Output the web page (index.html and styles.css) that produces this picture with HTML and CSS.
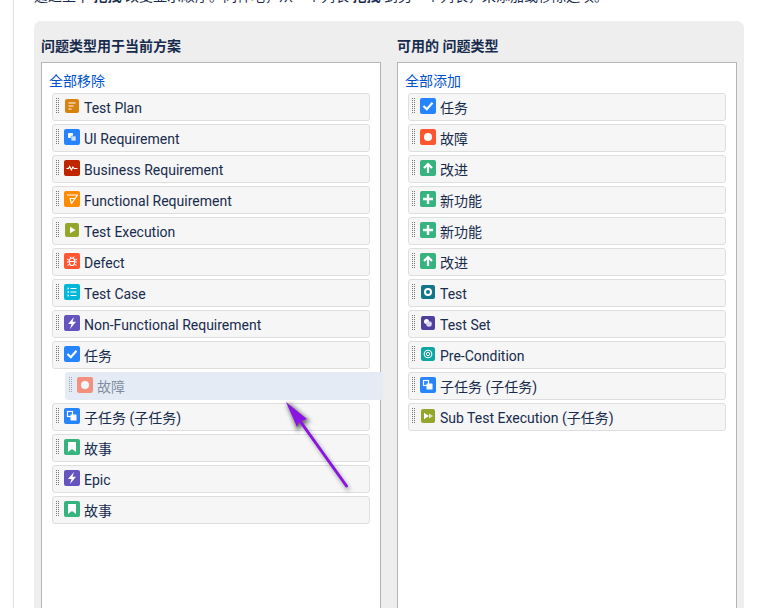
FILE: index.html
```html
<!DOCTYPE html>
<html lang="zh">
<head>
<meta charset="utf-8">
<title>问题类型方案</title>
<link rel="stylesheet" href="styles.css">
</head>
<body>
<svg class="defs" xmlns="http://www.w3.org/2000/svg">
<symbol id="i-plan" viewBox="0 0 14 14"><rect width="14" height="14" rx="2" fill="#d9820f"/><path d="M3.500 4h7M3.500 7h5M3.500 10h3" stroke="#fff" stroke-width="1.100"/></symbol>
<symbol id="i-ui" viewBox="0 0 16 16"><rect width="16" height="16" rx="2" fill="#2684ff"/><rect x="4" y="4" width="5" height="5" rx=".8" fill="#fff"/><rect x="7" y="7" width="5" height="5" rx=".8" fill="#cfe2ff" stroke="#2684ff" stroke-width=".6"/></symbol>
<symbol id="i-sub" viewBox="0 0 16 16"><rect width="16" height="16" rx="2" fill="#2684ff"/><rect x="3.500" y="3.500" width="5" height="5" fill="none" stroke="#fff" stroke-width="1.200"/><rect x="6.500" y="6.500" width="6" height="6" rx=".6" fill="#fff"/></symbol>
<symbol id="i-biz" viewBox="0 0 16 16"><rect width="16" height="16" rx="2" fill="#bf2600"/><path d="M2.500 8.500h2l1.200-2 1.600 3.500 1.600-3 1.200 1.500h3.400" fill="none" stroke="#fff" stroke-width="1.200"/></symbol>
<symbol id="i-func" viewBox="0 0 16 16"><rect width="16" height="16" rx="2" fill="#ff8b00"/><path d="M3 4h10.500L7.500 12.500 6 7.500h5" fill="none" stroke="#fff" stroke-width="1.200" stroke-linejoin="round"/></symbol>
<symbol id="i-exec" viewBox="0 0 14 14"><rect width="14" height="14" rx="2" fill="#94a62b"/><path d="M5 3.800 10.500 7 5 10.200z" fill="#fff"/></symbol>
<symbol id="i-subexec" viewBox="0 0 14 14"><rect width="14" height="14" rx="2" fill="#94a62b"/><path d="M3 3.800 8 7 3 10.200z" fill="#fff"/><path d="M8 4.500 12 7 8 9.500z" fill="#e4e9c3"/></symbol>
<symbol id="i-defect" viewBox="0 0 16 16"><rect width="16" height="16" rx="2" fill="#ff5630"/><rect x="5.500" y="5" width="5" height="7.500" rx="2.500" fill="none" stroke="#fff" stroke-width="1.200"/><path d="M6 3.500l1 1.500M10 3.500l-1 1.500M3 6l2.500 1.500M13 6l-2.500 1.500M3 9h2.500M13 9h-2.500M3.500 12.500l2-1.500M12.500 12.500l-2-1.500M5.500 8.500h5" stroke="#fff" stroke-width="1"/></symbol>
<symbol id="i-case" viewBox="0 0 16 16"><rect width="16" height="16" rx="2" fill="#00b8d9"/><path d="M6.500 4.500h6M6.500 8h6M6.500 11.500h6" stroke="#fff" stroke-width="1.200"/><path d="M3.500 4.500h1.500M3.500 8h1.500M3.500 11.500h1.500" stroke="#fff" stroke-width="1.600"/></symbol>
<symbol id="i-bolt" viewBox="0 0 16 16"><rect width="16" height="16" rx="2" fill="#6554c0"/><path d="M10 2 4 9h3.500L6 14l6-7.200H8.500z" fill="#fff"/></symbol>
<symbol id="i-task" viewBox="0 0 16 16"><rect width="16" height="16" rx="2" fill="#2684ff"/><path d="M3.500 8 6.800 11.200 12.500 4.800" fill="none" stroke="#fff" stroke-width="2.200"/></symbol>
<symbol id="i-bug" viewBox="0 0 16 16"><rect width="16" height="16" rx="2" fill="#ff5630"/><circle cx="8" cy="8" r="4" fill="#fff"/></symbol>
<symbol id="i-story" viewBox="0 0 16 16"><rect width="16" height="16" rx="2" fill="#36b37e"/><path d="M4 3h8v10L8 10l-4 3z" fill="#fff"/></symbol>
<symbol id="i-up" viewBox="0 0 16 16"><rect width="16" height="16" rx="2" fill="#36b37e"/><path d="M8 13V4M4 8l4-4 4 4" fill="none" stroke="#fff" stroke-width="2.200"/></symbol>
<symbol id="i-plus" viewBox="0 0 16 16"><rect width="16" height="16" rx="2" fill="#36b37e"/><path d="M8 3v10M3 8h10" stroke="#fff" stroke-width="2.400"/></symbol>
<symbol id="i-test" viewBox="0 0 14 14"><rect width="14" height="14" rx="2" fill="#12758a"/><circle cx="7" cy="7" r="3" fill="none" stroke="#fff" stroke-width="2"/></symbol>
<symbol id="i-set" viewBox="0 0 14 14"><rect width="14" height="14" rx="2" fill="#4f3f9e"/><circle cx="5.500" cy="5.500" r="2.500" fill="#fff"/><circle cx="8" cy="8" r="2.800" fill="#dcd8f0"/></symbol>
<symbol id="i-pre" viewBox="0 0 14 14"><rect width="14" height="14" rx="2.500" fill="#0ea5a5"/><circle cx="7" cy="7" r="3.800" fill="none" stroke="#fff" stroke-width="1.100"/><circle cx="7" cy="7" r="1.700" fill="none" stroke="#fff" stroke-width="1"/></symbol>
</svg>

<main class="page">
  <p class="intro">通过上下 <strong>拖拽</strong> 改变显示顺序。同样地，从一个列表 <strong>拖拽</strong> 到另一个列表，来添加或移除选项。</p>
  <section class="panel">
    <div class="col">
      <h3 class="col-title">问题类型用于当前方案</h3>
      <div class="box">
        <a class="bulk" href="#">全部移除</a>
        <ul class="list">
          <li class="item"><span class="grip"></span><svg class="ico small"><use href="#i-plan"/></svg><span>Test Plan</span></li>
          <li class="item"><span class="grip"></span><svg class="ico"><use href="#i-ui"/></svg><span>UI Requirement</span></li>
          <li class="item"><span class="grip"></span><svg class="ico"><use href="#i-biz"/></svg><span>Business Requirement</span></li>
          <li class="item"><span class="grip"></span><svg class="ico"><use href="#i-func"/></svg><span>Functional Requirement</span></li>
          <li class="item"><span class="grip"></span><svg class="ico small"><use href="#i-exec"/></svg><span>Test Execution</span></li>
          <li class="item"><span class="grip"></span><svg class="ico"><use href="#i-defect"/></svg><span>Defect</span></li>
          <li class="item"><span class="grip"></span><svg class="ico"><use href="#i-case"/></svg><span>Test Case</span></li>
          <li class="item"><span class="grip"></span><svg class="ico"><use href="#i-bolt"/></svg><span>Non-Functional Requirement</span></li>
          <li class="item"><span class="grip"></span><svg class="ico"><use href="#i-task"/></svg><span>任务</span></li>
          <li class="item ghost"><span class="grip"></span><svg class="ico"><use href="#i-bug"/></svg><span>故障</span></li>
          <li class="item"><span class="grip"></span><svg class="ico"><use href="#i-sub"/></svg><span>子任务 (子任务)</span></li>
          <li class="item"><span class="grip"></span><svg class="ico"><use href="#i-story"/></svg><span>故事</span></li>
          <li class="item"><span class="grip"></span><svg class="ico"><use href="#i-bolt"/></svg><span>Epic</span></li>
          <li class="item"><span class="grip"></span><svg class="ico"><use href="#i-story"/></svg><span>故事</span></li>
        </ul>
      </div>
    </div>
    <div class="col">
      <h3 class="col-title">可用的 问题类型</h3>
      <div class="box">
        <a class="bulk" href="#">全部添加</a>
        <ul class="list">
          <li class="item"><span class="grip"></span><svg class="ico"><use href="#i-task"/></svg><span>任务</span></li>
          <li class="item"><span class="grip"></span><svg class="ico"><use href="#i-bug"/></svg><span>故障</span></li>
          <li class="item"><span class="grip"></span><svg class="ico"><use href="#i-up"/></svg><span>改进</span></li>
          <li class="item"><span class="grip"></span><svg class="ico"><use href="#i-plus"/></svg><span>新功能</span></li>
          <li class="item"><span class="grip"></span><svg class="ico"><use href="#i-plus"/></svg><span>新功能</span></li>
          <li class="item"><span class="grip"></span><svg class="ico"><use href="#i-up"/></svg><span>改进</span></li>
          <li class="item"><span class="grip"></span><svg class="ico small"><use href="#i-test"/></svg><span>Test</span></li>
          <li class="item"><span class="grip"></span><svg class="ico small"><use href="#i-set"/></svg><span>Test Set</span></li>
          <li class="item"><span class="grip"></span><svg class="ico small"><use href="#i-pre"/></svg><span>Pre-Condition</span></li>
          <li class="item"><span class="grip"></span><svg class="ico"><use href="#i-sub"/></svg><span>子任务 (子任务)</span></li>
          <li class="item"><span class="grip"></span><svg class="ico small"><use href="#i-subexec"/></svg><span>Sub Test Execution (子任务)</span></li>
        </ul>
      </div>
    </div>
  </section>
</main>

<svg class="arrow" viewBox="0 0 776 608" xmlns="http://www.w3.org/2000/svg">
  <path class="arrow-shadow" d="M348 489 301 422"/>
  <path class="arrow-shadow" d="M288 404l10 25 2.500-5 7.500-3z"/>
  <path class="arrow-line" d="M346.500 486 300 421"/>
  <path class="arrow-head" d="M286 402l11 25 2.500-5 7.500-3z"/>
</svg>
</body>
</html>
```

FILE: styles.css
```css
* { box-sizing: border-box; }

html, body {
  margin: 0;
  height: 608px;
  overflow: hidden;
  background: #fff;
}

body {
  position: relative;
  font-family: Roboto, "Noto Sans CJK SC", sans-serif;
  font-size: 14px;
  color: #172b4d;
}

.defs { display: none; }

.page {
  display: flow-root;
  margin-left: 13px;
  width: 731px;
  height: 608px;
  padding-left: 20px;
  border-left: 1px solid #dfdfdf;
}

.intro {
  margin: -14px 0 0;
  height: 35px;
  line-height: 20px;
  white-space: nowrap;
}

.panel {
  display: flex;
  gap: 16px;
  height: 587px;
  overflow: hidden;
  padding: 16px 7px 0;
  background: #eee;
  border-radius: 7px 7px 0 0;
}

.col { width: 340px; }

.col-title {
  margin: 0 0 6px;
  font-size: 14px;
  line-height: 19px;
  font-weight: 700;
  color: #172b4d;
}

.box {
  height: 560px;
  padding: 8px 10px 0;
  background: #fff;
  border: 1px solid #b5b5b5;
}

.bulk {
  display: block;
  margin-left: -3px;
  height: 22px;
  line-height: 20px;
  color: #0052cc;
  text-decoration: none;
}

.list {
  margin: 0;
  padding: 0;
  list-style: none;
  display: flex;
  flex-direction: column;
  gap: 3px;
}

.item {
  display: flex;
  align-items: flex-start;
  height: 28px;
  padding: 4px 0 0 3px;
  line-height: 20px;
  background: #f6f6f6;
  border: 1px solid #dedede;
  border-radius: 3px;
}

.grip {
  flex: none;
  width: 3px;
  height: 15px;
  border-left: 1px dotted #777;
  border-right: 1px dotted #777;
}

.ico {
  flex: none;
  width: 16px;
  height: 16px;
  margin: 0 4px 0 5px;
}

.ico.small {
  width: 14px;
  height: 14px;
  margin: 1px 5px 0 6px;
}

.ghost {
  margin: 0 -13px 0 13px;
  background: #e4ebf4;
  border-color: #e4ebf4;
  color: #172b4d80;
}

.ghost .grip,
.ghost .ico { opacity: .6; }

.arrow {
  position: absolute;
  inset: 0;
  width: 776px;
  height: 608px;
  pointer-events: none;
}

.arrow-line {
  fill: none;
  stroke: #8a14e0;
  stroke-width: 3;
  stroke-linecap: round;
}

.arrow-head { fill: #8a14e0; }

.arrow-shadow {
  fill: #0006;
  stroke: #0006;
  stroke-width: 3;
  stroke-linecap: round;
  filter: blur(2px);
}
```
